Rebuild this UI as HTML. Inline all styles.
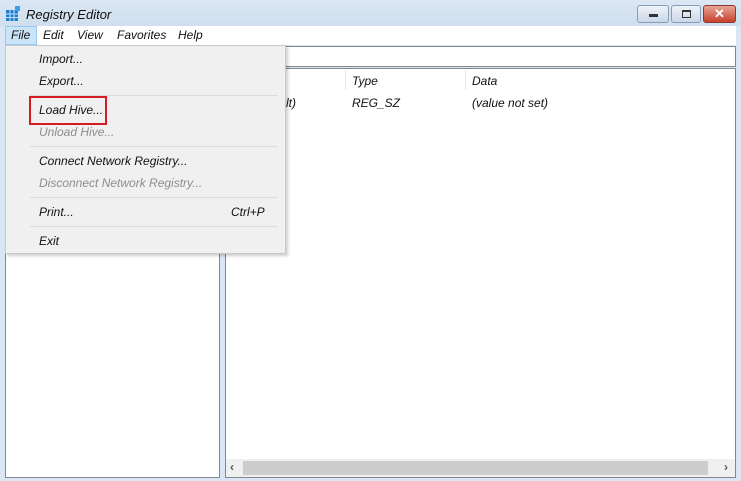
<!DOCTYPE html>
<html><head><style>
*{margin:0;padding:0;box-sizing:border-box}
body{width:741px;height:481px;background:#dae6f3;font-family:"Liberation Sans",sans-serif;font-size:12px;font-style:italic;color:#111;position:relative;overflow:hidden}
.a{position:absolute}
.title{left:0;top:0;width:741px;height:26px;background:linear-gradient(#dbe7f4,#cfdeee)}
.menu{left:5px;top:26px;width:731px;height:19px;background:#fff}
.mi{top:28px}
.btn{top:5px;height:18px;border:1px solid #8a9bb3;border-radius:3px;background:linear-gradient(#eef3f9,#c9d7e8)}
.pop{left:5px;top:45px;width:281px;height:209px;background:#f0f0f0;border:1px solid #c8c8c8;box-shadow:2px 2px 3px rgba(0,0,0,.2)}
.it{left:34px}
.dis{color:#8d8d8d}
.sep{left:30px;width:248px;height:1px;background:#dcdcdc}
</style></head><body>
<div class="a title"></div>
<svg class="a" style="left:5px;top:6px" width="16" height="16"><rect x="1" y="4" width="12" height="11" fill="#1f7fd0"/><g stroke="#bfe0ff" stroke-width="1"><line x1="1" y1="8" x2="13" y2="8"/><line x1="1" y1="11.5" x2="13" y2="11.5"/><line x1="5" y1="4" x2="5" y2="15"/><line x1="9" y1="4" x2="9" y2="15"/></g><rect x="10" y="0" width="5" height="5" fill="#3aa0e8"/></svg>
<div class="a" style="left:26px;top:7px;font-size:13px">Registry Editor</div>
<div class="a btn" style="left:637px;width:32px"><div class="a" style="left:11px;top:8px;width:9px;height:3px;background:#333"></div></div>
<div class="a btn" style="left:671px;width:30px"><div class="a" style="left:10px;top:4px;width:9px;height:8px;border:1px solid #333;border-top-width:2px"></div></div>
<div class="a btn" style="left:703px;width:33px;background:linear-gradient(#e8a393,#c7412c);border-color:#8a3a2e;color:#fff;font-weight:bold;font-style:normal;text-align:center;line-height:16px;font-size:13px">✕</div>
<div class="a menu"></div>
<div class="a" style="left:5px;top:26px;width:32px;height:19px;background:#cce4f7;border:1px solid #99c9ef"></div>
<div class="a mi" style="left:11px">File</div>
<div class="a mi" style="left:43px">Edit</div>
<div class="a mi" style="left:77px">View</div>
<div class="a mi" style="left:117px">Favorites</div>
<div class="a mi" style="left:178px">Help</div>
<div class="a" style="left:5px;top:46px;width:731px;height:21px;background:#fff;border:1px solid #828790"></div>
<div class="a" style="left:5px;top:68px;width:215px;height:410px;background:#fff;border:1px solid #828790"></div>
<div class="a" style="left:225px;top:68px;width:511px;height:410px;background:#fff;border:1px solid #828790"></div>
<div class="a" style="left:345px;top:70px;width:1px;height:20px;background:#e5e5e5"></div>
<div class="a" style="left:465px;top:70px;width:1px;height:20px;background:#e5e5e5"></div>
<div class="a" style="left:352px;top:74px">Type</div>
<div class="a" style="left:472px;top:74px">Data</div>
<div class="a" style="left:286px;top:96px">lt)</div>
<div class="a" style="left:352px;top:96px">REG_SZ</div>
<div class="a" style="left:472px;top:96px">(value not set)</div>
<div class="a" style="left:226px;top:459px;width:509px;height:18px;background:#f0f0f0"></div>
<div class="a" style="left:243px;top:461px;width:465px;height:14px;background:#cdcdcd"></div>
<div class="a" style="left:230px;top:460px;font-style:normal;font-weight:bold;color:#555">‹</div>
<div class="a" style="left:724px;top:460px;font-style:normal;font-weight:bold;color:#555">›</div>
<div class="a pop"></div>
<div class="a it" style="left:39px;top:52px">Import...</div>
<div class="a it" style="left:39px;top:74px">Export...</div>
<div class="a sep" style="top:95px"></div>
<div class="a it" style="left:39px;top:103px">Load Hive...</div>
<div class="a" style="left:29px;top:96px;width:78px;height:29px;border:2px solid #d41c24"></div>
<div class="a it dis" style="left:39px;top:125px">Unload Hive...</div>
<div class="a sep" style="top:146px"></div>
<div class="a it" style="left:39px;top:154px">Connect Network Registry...</div>
<div class="a it dis" style="left:39px;top:176px">Disconnect Network Registry...</div>
<div class="a sep" style="top:197px"></div>
<div class="a it" style="left:39px;top:205px">Print...</div>
<div class="a" style="left:231px;top:205px">Ctrl+P</div>
<div class="a sep" style="top:226px"></div>
<div class="a it" style="left:39px;top:234px">Exit</div>
</body></html>
